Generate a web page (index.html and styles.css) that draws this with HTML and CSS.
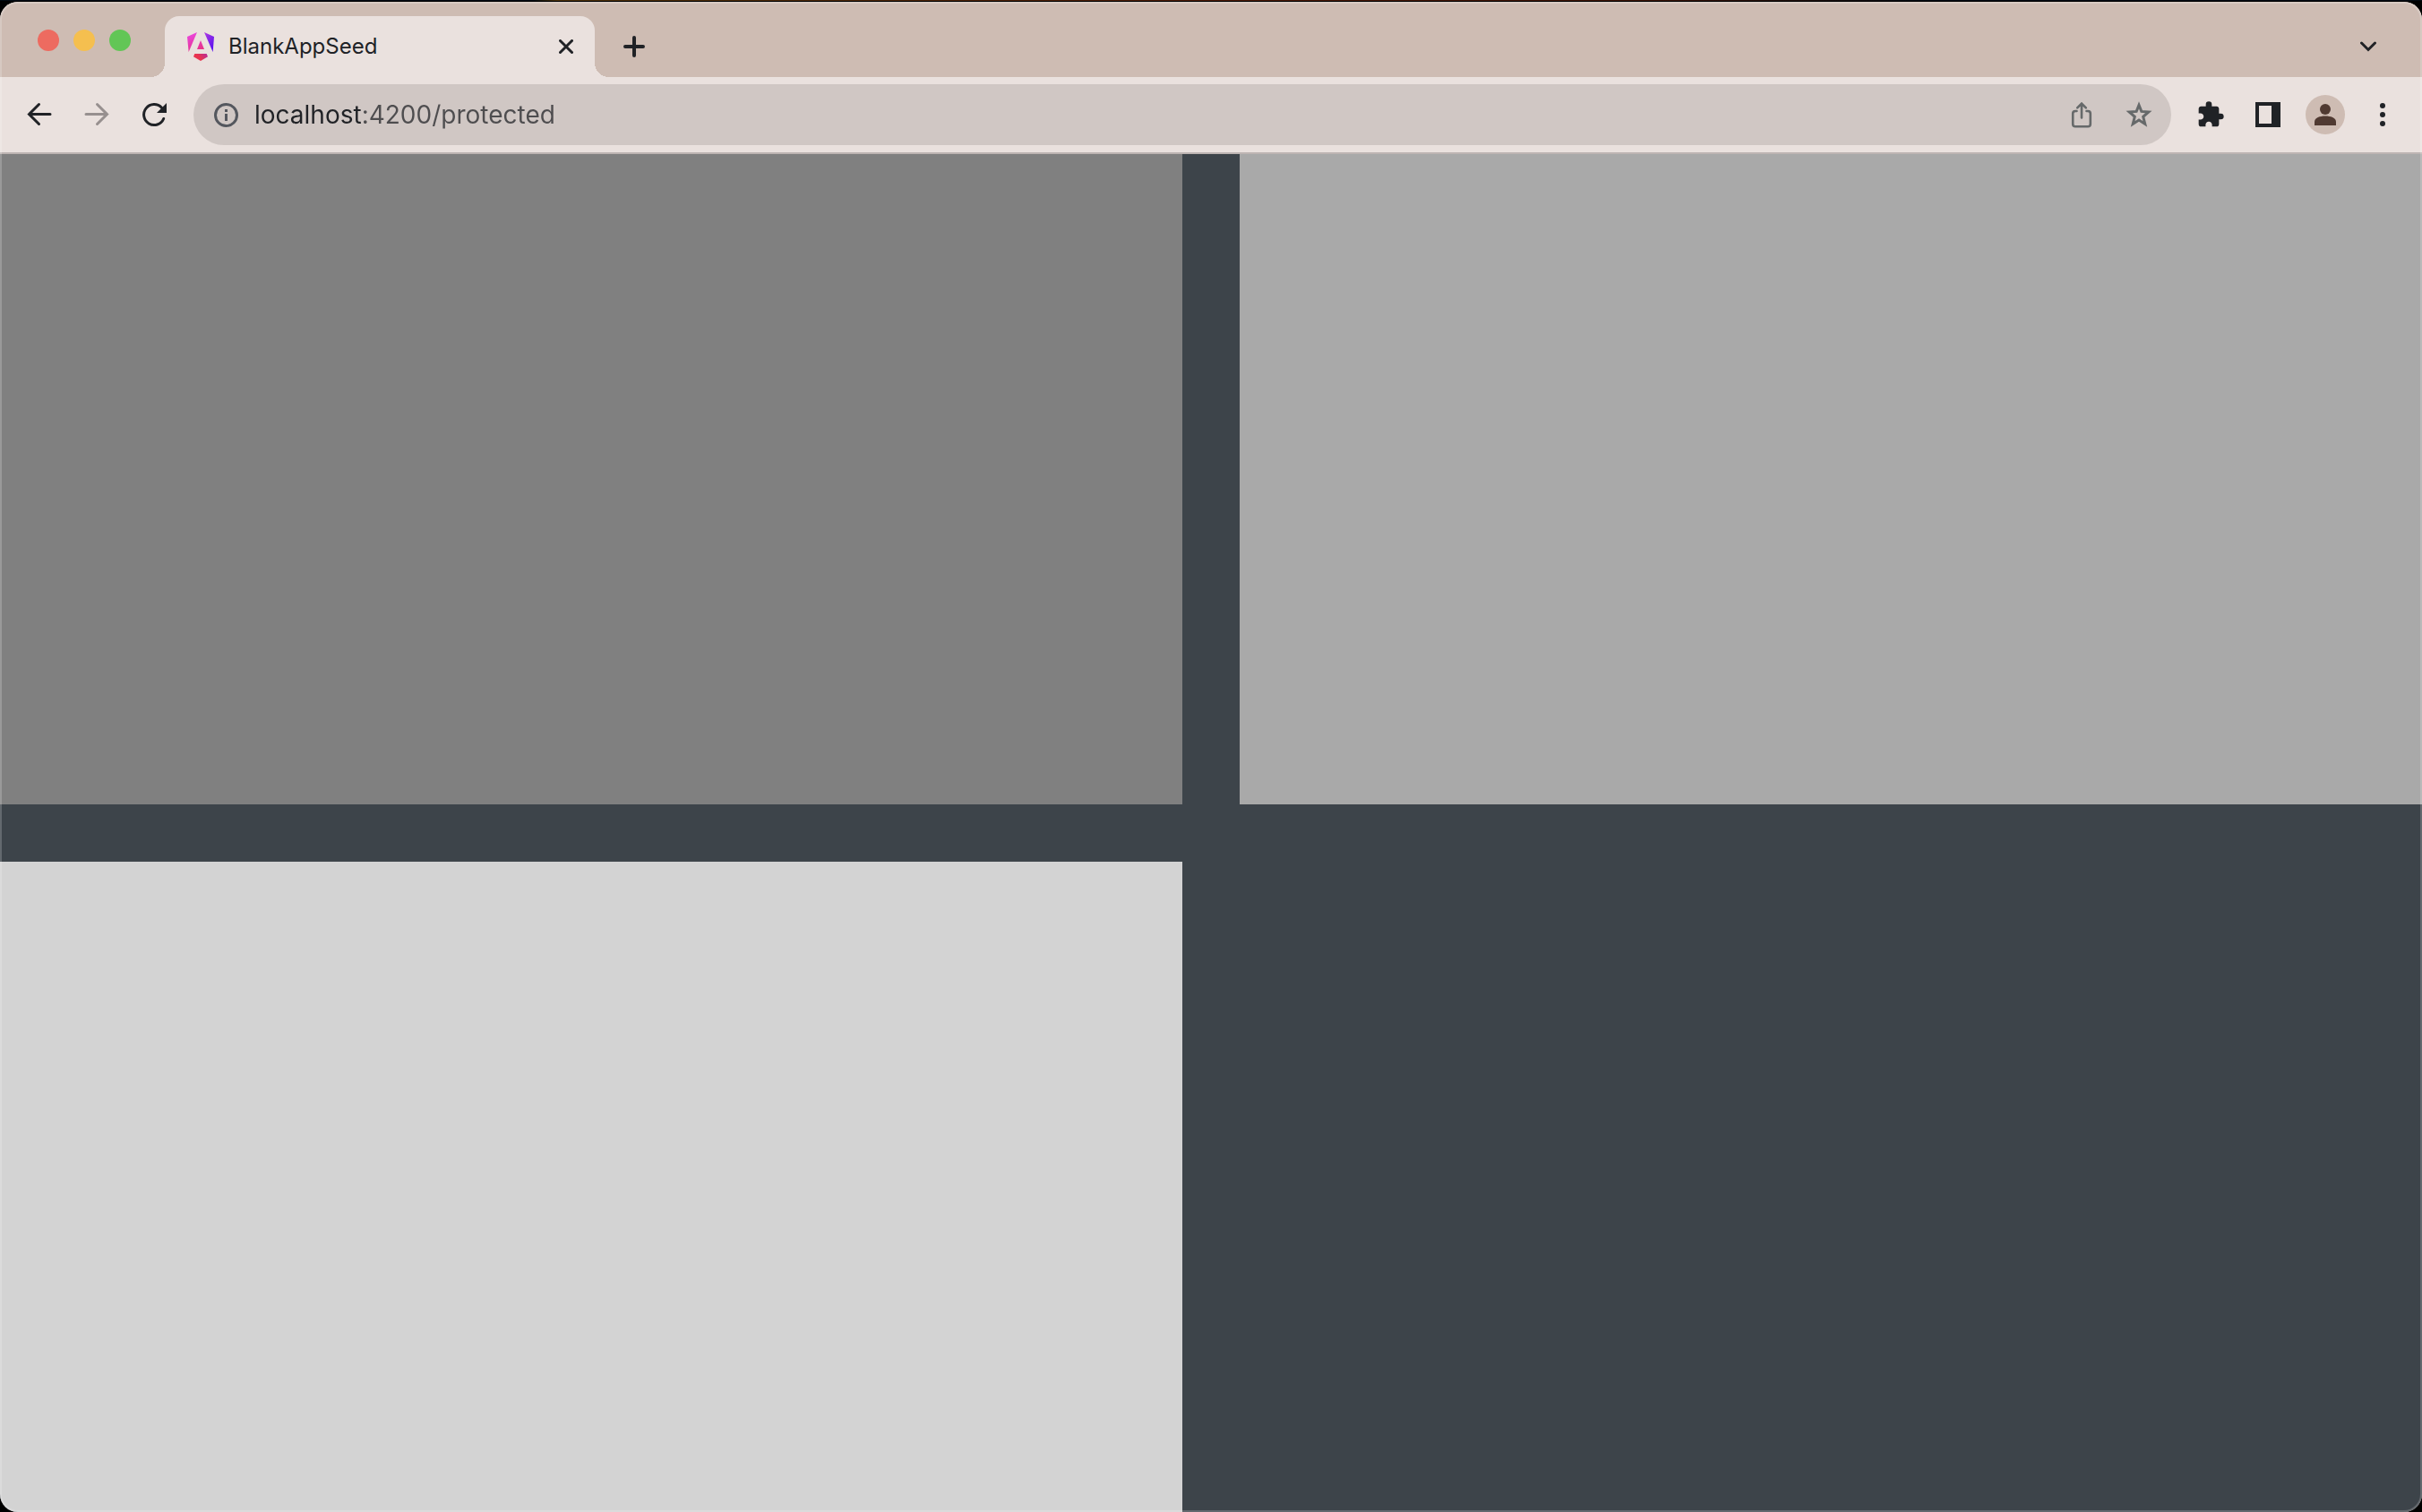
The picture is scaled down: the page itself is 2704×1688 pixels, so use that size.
FILE: index.html
```html
<!DOCTYPE html>
<html lang="en">
<head>
<meta charset="utf-8">
<title>BlankAppSeed</title>
<link rel="stylesheet" href="styles.css">
</head>
<body>
<div class="window">
  <header class="tab-strip">
    <div class="window-controls">
      <button class="light light-close" aria-label="Close window"></button>
      <button class="light light-minimize" aria-label="Minimize window"></button>
      <button class="light light-zoom" aria-label="Zoom window"></button>
    </div>
    <div class="tab">
      <svg class="favicon" viewBox="0 0 90 96" aria-hidden="true">
        <defs>
          <linearGradient id="pink" gradientUnits="userSpaceOnUse" x1="20" y1="5" x2="50" y2="92">
            <stop offset="0" stop-color="#ea45d8"/><stop offset="0.5" stop-color="#e6359c"/><stop offset="1" stop-color="#ea3352"/>
          </linearGradient>
          <linearGradient id="violet" x1="0" y1="0" x2="0.6" y2="1">
            <stop offset="0" stop-color="#b03be0"/><stop offset="1" stop-color="#5a10f0"/>
          </linearGradient>
          <linearGradient id="base" x1="0" y1="0.6" x2="1" y2="0.2">
            <stop offset="0.4" stop-color="#e8344f"/><stop offset="1" stop-color="#b92c98"/>
          </linearGradient>
        </defs>
        <path fill="url(#pink)" d="M0 15 33 0 5 66Z"/>
        <path fill="url(#violet)" d="M57 0 90 15 86 66Z"/>
        <path fill="url(#pink)" d="M45 27 57 57H33Z"/>
        <path fill="url(#base)" d="M25 72H65L69 82 45 96 21 82Z"/>
      </svg>
      <span class="tab-title">BlankAppSeed</span>
      <button class="tab-close" aria-label="Close tab">
        <svg width="16" height="16" viewBox="0 0 16 16"><path class="line" d="M1.5 1.5 14.5 14.5M14.5 1.5 1.5 14.5"/></svg>
      </button>
    </div>
    <button class="tool new-tab" aria-label="New tab">
      <svg width="24" height="24" viewBox="0 0 24 24"><path class="line thick" d="M12 2V22M2 12H22"/></svg>
    </button>
    <button class="tool tab-search" aria-label="Search tabs">
      <svg width="20" height="12" viewBox="0 0 20 12"><path class="line" d="M2.5 2 10 9.5 17.5 2"/></svg>
    </button>
  </header>

  <nav class="toolbar" aria-label="Browser toolbar">
    <button class="tool" aria-label="Back">
      <svg width="32" height="32" viewBox="0 0 32 32"><path class="line" d="M28 15.500H4.500M15.500 4.500 4.500 15.500 15.500 26.500"/></svg>
    </button>
    <button class="tool faded" aria-label="Forward">
      <svg width="32" height="32" viewBox="0 0 32 32"><path class="line" d="M4 15.500H27.500M16.500 4.500 27.500 15.500 16.500 26.500"/></svg>
    </button>
    <button class="tool" aria-label="Reload">
      <svg width="32" height="32" viewBox="0 0 32 32"><path class="line" d="M26.700 20.500A11.500 11.500 0 1 1 24.500 8.200"/><path fill="currentColor" d="M30 3V14H19Z"/></svg>
    </button>
    <div class="omnibox">
      <button class="tool info" aria-label="View site information">
        <svg width="32" height="32" viewBox="0 0 32 32"><circle cx="16.500" cy="16.500" r="12" fill="none" stroke="currentColor" stroke-width="3"/><path fill="currentColor" d="M15 10H18V13H15ZM15 15H18V23H15Z"/></svg>
      </button>
      <input class="url" type="text" aria-label="Address" value="localhost:4200/protected" spellcheck="false">
      <button class="tool muted" aria-label="Share this page">
        <svg width="32" height="32" viewBox="0 0 32 32"><path class="line thin" d="M10.500 12H9Q6.200 12 6.200 14.800V26.500Q6.200 29.300 9 29.300H23Q25.800 29.300 25.800 26.500V14.800Q25.800 12 23 12H21.500M16 19.500V4M11.200 8.400 16 3.600 20.800 8.400"/></svg>
      </button>
      <button class="tool muted" aria-label="Bookmark this page">
        <svg width="32" height="32" viewBox="0 0 32 32"><path fill="none" stroke="currentColor" stroke-width="3" d="M16 5.300 18.800 12.400 26.800 13 20.700 18.300 22.800 26.400 16 22.100 9.200 26.400 11.300 18.300 5.200 13 13.200 12.400Z"/></svg>
      </button>
    </div>
    <button class="tool" aria-label="Extensions">
      <svg width="32" height="32" viewBox="0 0 24 24"><path fill="currentColor" d="M20.500 11H19V7c0-1.100-.9-2-2-2h-4V3.500a2.500 2.500 0 0 0-5 0V5H4c-1.100 0-2 .9-2 2v3.800h1.500c1.500 0 2.700 1.200 2.700 2.700S5 16.200 3.500 16.200H2V20c0 1.100.9 2 2 2h3.800v-1.500c0-1.500 1.200-2.700 2.700-2.700s2.700 1.200 2.700 2.700V22H17c1.100 0 2-.9 2-2v-4h1.500a2.500 2.500 0 0 0 0-5z"/></svg>
    </button>
    <button class="tool" aria-label="Side panel">
      <svg width="28" height="28" viewBox="0 0 28 28"><path fill="currentColor" fill-rule="evenodd" d="M0 0H28V28H0ZM4 4V24H18V4Z"/></svg>
    </button>
    <button class="tool" aria-label="Profile">
      <svg width="44" height="44" viewBox="0 0 44 44"><circle cx="22" cy="22" r="22" fill="#cebcb3"/><circle cx="22" cy="16" r="6" fill="#503a32"/><path fill="#503a32" d="M10 34V30C10 25.500 16 23.500 22 23.500S34 25.500 34 30V34Z"/></svg>
    </button>
    <button class="tool" aria-label="Menu">
      <svg width="8" height="28" viewBox="0 0 8 28" fill="currentColor"><circle cx="4" cy="4" r="3"/><circle cx="4" cy="14" r="3"/><circle cx="4" cy="24" r="3"/></svg>
    </button>
  </nav>

  <main class="panes">
    <section class="pane pane-gray"></section>
    <section class="pane pane-dark-gray"></section>
    <section class="pane pane-light-gray"></section>
  </main>
</div>
</body>
</html>
```
FILE: styles.css
```css
* {
  box-sizing: border-box;
}

body {
  margin: 0;
  height: 100vh;
  padding-top: 2px;
  /* a sliver of the desktop shows above the window */
  background: linear-gradient(to right, #020a12 22%, #4a300a 23%, #4a1a08 50%, #3a1408 68%, #020a12 80%) 0 0 / 100% 1px no-repeat #000;
  color: #202226;
  font-family: Inter, "Liberation Sans", sans-serif;
}

button {
  padding: 0;
  border: 0;
  background: none;
  color: inherit;
}

svg {
  display: block;
}

.line {
  fill: none;
  stroke: currentColor;
  stroke-width: 3;
  stroke-linecap: round;
}

.thick {
  stroke-width: 4;
}

.thin {
  stroke-width: 2.6;
}

.window {
  position: relative;
  display: flex;
  flex-direction: column;
  height: 100%;
  overflow: hidden;
  border-radius: 20px;
  background: #eae1de;
}

/* translucent rim around the whole window */
.window::after {
  content: "";
  position: absolute;
  inset: 0;
  border: 2px solid rgba(255, 255, 255, 0.2);
  border-radius: 20px;
  pointer-events: none;
}

.tab-strip {
  display: flex;
  align-items: center;
  height: 84px;
  padding-right: 28px;
  background: #cebcb3;
}

.window-controls {
  display: flex;
  gap: 16px;
  width: 184px;
  padding: 2px 0 0 42px;
}

.light {
  width: 24px;
  height: 24px;
  border-radius: 50%;
}

.light-close {
  background: #ed6b60;
}

.light-minimize {
  background: #f5bf4f;
}

.light-zoom {
  background: #62c656;
}

.tab {
  position: relative;
  display: flex;
  align-items: center;
  align-self: flex-end;
  width: 480px;
  height: 68px;
  padding: 0 16px 0 25px;
  border-radius: 16px 16px 0 0;
  background: #eae1de;
}

/* curved feet that join the tab to the toolbar */
.tab::before,
.tab::after {
  content: "";
  position: absolute;
  bottom: 0;
  width: 16px;
  height: 16px;
}

.tab::before {
  right: 100%;
  background: radial-gradient(circle at 0 0, transparent 16px, #eae1de 16px);
}

.tab::after {
  left: 100%;
  background: radial-gradient(circle at 100% 0, transparent 16px, #eae1de 16px);
}

.favicon {
  width: 30px;
  height: 32px;
}

.tab-title {
  flex: 1;
  margin-left: 16px;
  font-size: 24px;
  line-height: 32px;
}

.tab-close {
  display: grid;
  place-items: center;
  width: 32px;
  height: 32px;
}

.tool {
  display: grid;
  place-items: center;
  flex: none;
  width: 64px;
  height: 64px;
}

.new-tab {
  margin: 16px 0 0 12px;
}

.tab-search {
  margin: 16px 0 0 auto;
}

.faded {
  color: #97908f;
}

.muted {
  color: #66696a;
}

.toolbar {
  display: flex;
  align-items: center;
  height: 86px;
  padding: 0 12px;
  border-bottom: 2px solid #bdb4b2;
}

.omnibox {
  display: flex;
  align-items: center;
  flex: 1;
  height: 68px;
  margin: 0 12px;
  padding: 0 4px;
  border-radius: 34px;
  background: #d0c7c4;
}

.info {
  color: #54575e;
}

/* host name in the dark tone, the rest of the address in the lighter one */
.url {
  flex: 1;
  min-width: 0;
  height: 48px;
  padding: 0;
  border: 0;
  outline: 0;
  background: linear-gradient(to right, #202226 119px, #4e4d4f 119px);
  -webkit-background-clip: text;
  background-clip: text;
  -webkit-text-fill-color: transparent;
  color: #202226;
  font: 28px/48px Inter, "Liberation Sans", sans-serif;
}

.panes {
  display: grid;
  flex: 1;
  grid-template: 1fr 1fr / 1fr 1fr;
  gap: 64px;
  background: #3d444a;
}

.pane-gray {
  background: #808080;
}

.pane-dark-gray {
  background: #a9a9a9;
}

.pane-light-gray {
  background: #d3d3d3;
}
```
